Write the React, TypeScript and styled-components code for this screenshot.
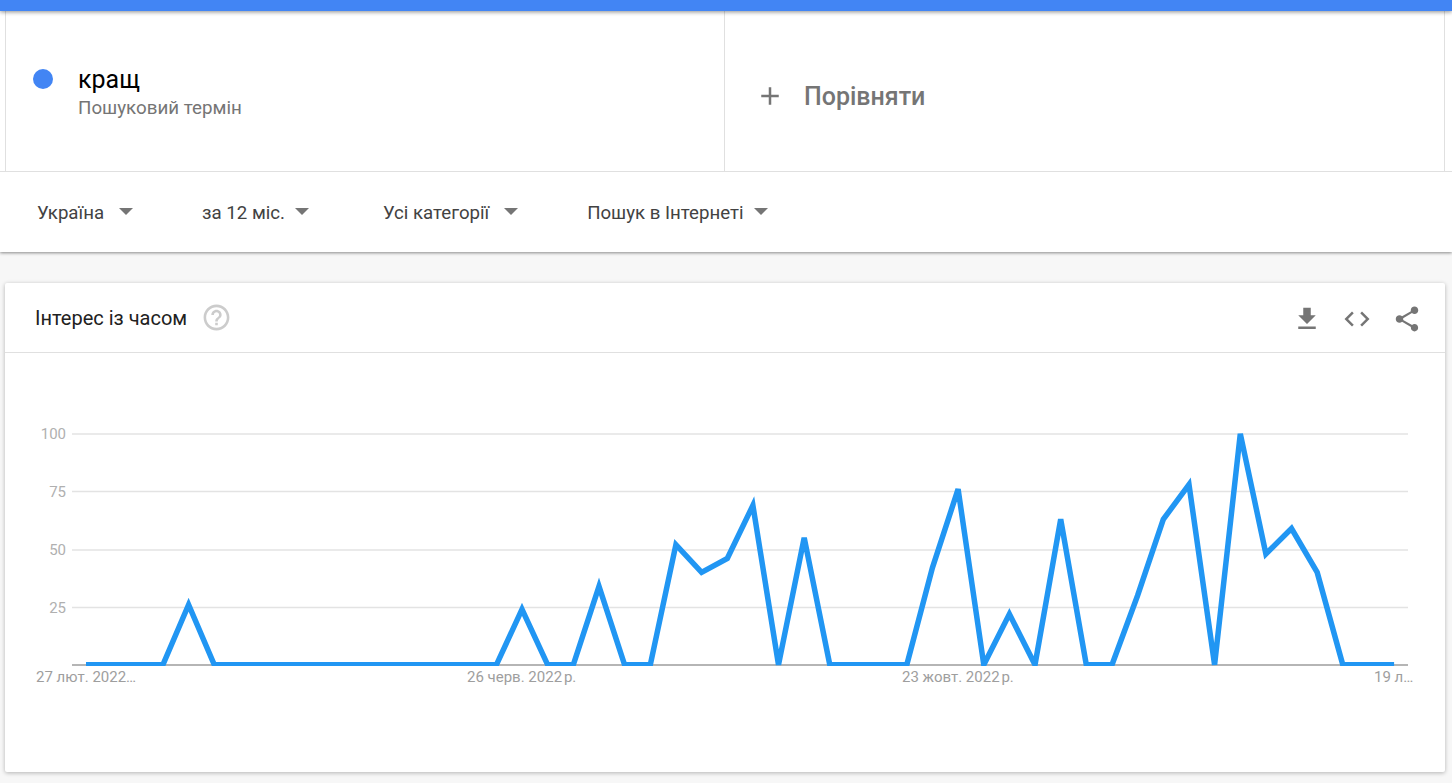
import React from "react";
import styled, { createGlobalStyle } from "styled-components";

const GlobalStyle = createGlobalStyle`
  html, body {
    margin: 0;
    padding: 0;
    background-color: #f7f7f7;
    font-family: Roboto, "Liberation Sans", sans-serif;
  }
`;

const Page = styled.div`
  width: 1452px;
  height: 783px;
  overflow: hidden;
  display: flex;
  flex-direction: column;
`;

const TopBar = styled.div`
  height: 11px;
  background-color: #4285f4;
  box-shadow: 0 1px 4px rgba(0, 0, 0, 0.45);
  position: relative;
  z-index: 2;
`;

const Header = styled.div`
  background-color: #ffffff;
  box-shadow: 0 1px 3px rgba(0, 0, 0, 0.45);
`;

const TermRow = styled.div`
  height: 160px;
  padding-left: 5px;
  display: flex;
  border-bottom: 1px solid #e0e0e0;
`;

const TermCell = styled.div`
  width: 719px;
  display: flex;
  border-left: 1px solid #e0e0e0;
  box-sizing: border-box;
`;

const CompareCell = styled(TermCell)`
  width: 721px;
  border-right: 1px solid #e0e0e0;
  align-items: center;
  padding: 10px 0 0 30px;
`;

const Dot = styled.div`
  width: 20px;
  height: 20px;
  border-radius: 50%;
  background-color: #4285f4;
  margin: 58px 0 0 27px;
`;

const TermText = styled.div`
  margin: 52px 0 0 25px;
`;

const TermName = styled.div`
  font-size: 25px;
  line-height: 33px;
  color: #000000;
`;

const TermKind = styled.div`
  font-size: 18.75px;
  line-height: 22px;
  margin-top: 1px;
  color: #757575;
`;

const CompareLabel = styled.div`
  font-size: 25px;
  font-weight: 500;
  color: #757575;
  margin-left: 19px;
`;

const FilterRow = styled.div`
  height: 79px;
  padding: 1px 0 0 37px;
  display: flex;
  align-items: center;
`;

const Filter = styled.div<{ $gap: number; $after: number }>`
  display: flex;
  align-items: center;
  gap: ${({ $gap }) => $gap}px;
  margin-right: ${({ $after }) => $after}px;
  font-size: 18.67px;
  color: #424242;
`;

const Caret = styled.span`
  width: 0;
  height: 0;
  border-left: 7px solid transparent;
  border-right: 7px solid transparent;
  border-top: 7px solid #757575;
  margin-top: -3px;
`;

const Card = styled.div`
  margin: 31px 7px 0 5px;
  height: 489px;
  background-color: #ffffff;
  border-radius: 2px;
  box-shadow: 0 1px 4px rgba(0, 0, 0, 0.28);
  display: flex;
  flex-direction: column;
`;

const CardHeader = styled.div`
  height: 69px;
  flex-shrink: 0;
  padding: 0 23px 0 30px;
  display: flex;
  align-items: center;
  border-bottom: 1px solid #e0e0e0;
`;

const CardTitle = styled.div`
  font-size: 20px;
  color: #212121;
  margin-right: 14px;
`;

const Actions = styled.div`
  margin-left: auto;
  padding-top: 2px;
  display: flex;
  gap: 20px;
`;

const Icon = styled.svg<{ $color: string }>`
  width: 30px;
  height: 30px;
  display: block;
  fill: ${({ $color }) => $color};
`;

const HelpIcon = styled(Icon)`
  width: 31px;
  height: 31px;
  margin-bottom: 1px;
`;

const Chart = styled.svg`
  display: block;
  width: 1440px;
  height: 419px;
`;

const GridLine = styled.line<{ $axis?: boolean }>`
  stroke: ${({ $axis }) => ($axis ? "#b5b5b5" : "#e3e3e3")};
  stroke-width: ${({ $axis }) => ($axis ? 2 : 1.5)}px;
`;

const AxisText = styled.text`
  font-family: Roboto, "Liberation Sans", sans-serif;
  font-size: 15px;
  fill: #b0b0b0;
`;

const DateText = styled(AxisText)`
  fill: #9e9e9e;
`;

const TrendLine = styled.polyline`
  fill: none;
  stroke: #2196f3;
  stroke-width: 5.5px;
  stroke-linejoin: miter;
`;

const values = [
  0, 0, 0, 0, 26, 0, 0, 0, 0, 0, 0, 0, 0, 0, 0, 0, 0, 24, 0, 0, 34, 0, 0, 52, 40, 46, 69, 0, 55, 0, 0, 0, 0, 42, 76,
  0, 22, 0, 63, 0, 0, 30, 63, 78, 0, 100, 48, 59, 40, 0, 0, 0,
];

// chart coords are relative to the card body, which starts at x=5, y=353
const X_START = 81;
const X_STEP = 25.65;
const Y_ZERO = 311.8;
const Y_UNIT = 2.31;

const points = values.map((v, i) => `${(X_START + i * X_STEP).toFixed(1)},${(Y_ZERO - v * Y_UNIT).toFixed(1)}`).join(" ");

const ticks = [
  { label: 100, y: 81 },
  { label: 75, y: 138.5 },
  { label: 50, y: 197 },
  { label: 25, y: 254.5 },
];

const dates = [
  { x: 31, label: "27 лют. 2022…" },
  { x: 462, label: "26 черв. 2022\u202fр." },
  { x: 897, label: "23 жовт. 2022\u202fр." },
  { x: 1369, label: "19 л…" },
];

const filters = [
  { label: "Україна", gap: 15, after: 69 },
  { label: "за 12 міс.", gap: 10, after: 74 },
  { label: "Усі категорії", gap: 15, after: 69 },
  { label: "Пошук в Інтернеті", gap: 10, after: 0 },
];

const App = (): JSX.Element => {
  return (
    <Page>
      <GlobalStyle />
      <TopBar />
      <Header>
        <TermRow>
          <TermCell>
            <Dot />
            <TermText>
              <TermName>кращ</TermName>
              <TermKind>Пошуковий термін</TermKind>
            </TermText>
          </TermCell>
          <CompareCell>
            <Icon $color="#757575" viewBox="0 0 24 24">
              <path d="M19 13h-6v6h-2v-6H5v-2h6V5h2v6h6v2z" />
            </Icon>
            <CompareLabel>Порівняти</CompareLabel>
          </CompareCell>
        </TermRow>
        <FilterRow>
          {filters.map((f) => (
            <Filter key={f.label} $gap={f.gap} $after={f.after}>
              {f.label}
              <Caret />
            </Filter>
          ))}
        </FilterRow>
      </Header>
      <Card>
        <CardHeader>
          <CardTitle>Інтерес із часом</CardTitle>
          <HelpIcon $color="#cccccc" viewBox="0 0 24 24">
            <path d="M11 18h2v-2h-2v2zm1-16C6.48 2 2 6.48 2 12s4.48 10 10 10 10-4.48 10-10S17.52 2 12 2zm0 18c-4.41 0-8-3.59-8-8s3.59-8 8-8 8 3.59 8 8-3.59 8-8 8zm0-14c-2.21 0-4 1.79-4 4h2c0-1.1.9-2 2-2s2 .9 2 2c0 2-3 1.75-3 5h2c0-2.25 3-2.5 3-5 0-2.21-1.79-4-4-4z" />
          </HelpIcon>
          <Actions>
            <Icon $color="#757575" viewBox="0 0 24 24">
              <path d="M19 9h-4V3H9v6H5l7 7 7-7zM5 18v2h14v-2H5z" />
            </Icon>
            <Icon $color="#757575" viewBox="0 0 24 24">
              <path d="M9.4 16.6L4.8 12l4.6-4.6L8 6l-6 6 6 6 1.4-1.4zm5.2 0l4.6-4.6-4.6-4.6L16 6l6 6-6 6-1.4-1.4z" />
            </Icon>
            <Icon $color="#757575" viewBox="0 0 24 24">
              <path d="M18 16.08c-.76 0-1.44.3-1.96.77L8.91 12.7c.05-.23.09-.46.09-.7s-.04-.47-.09-.7l7.05-4.11c.54.5 1.25.81 2.04.81 1.66 0 3-1.34 3-3s-1.34-3-3-3-3 1.34-3 3c0 .24.04.47.09.7L8.04 9.81C7.5 9.31 6.79 9 6 9c-1.66 0-3 1.34-3 3s1.34 3 3 3c.79 0 1.5-.31 2.04-.81l7.12 4.16c-.05.21-.08.43-.08.65 0 1.61 1.31 2.92 2.92 2.92 1.61 0 2.92-1.31 2.92-2.92s-1.31-2.92-2.92-2.92z" />
            </Icon>
          </Actions>
        </CardHeader>
        <Chart viewBox="0 0 1440 419">
          <defs>
            <clipPath id="plot">
              <rect x={67} y={80} width={1336} height={233} />
            </clipPath>
          </defs>
          {ticks.map((t) => (
            <g key={t.label}>
              <GridLine x1={67} x2={1403} y1={t.y} y2={t.y} />
              <AxisText x={61} y={t.y + 5} textAnchor="end">
                {t.label}
              </AxisText>
            </g>
          ))}
          <GridLine $axis x1={67} x2={1403} y1={312} y2={312} />
          <TrendLine points={points} clipPath="url(#plot)" />
          {dates.map((d) => (
            <DateText key={d.label} x={d.x} y={329}>
              {d.label}
            </DateText>
          ))}
        </Chart>
      </Card>
    </Page>
  );
};

export default App;
